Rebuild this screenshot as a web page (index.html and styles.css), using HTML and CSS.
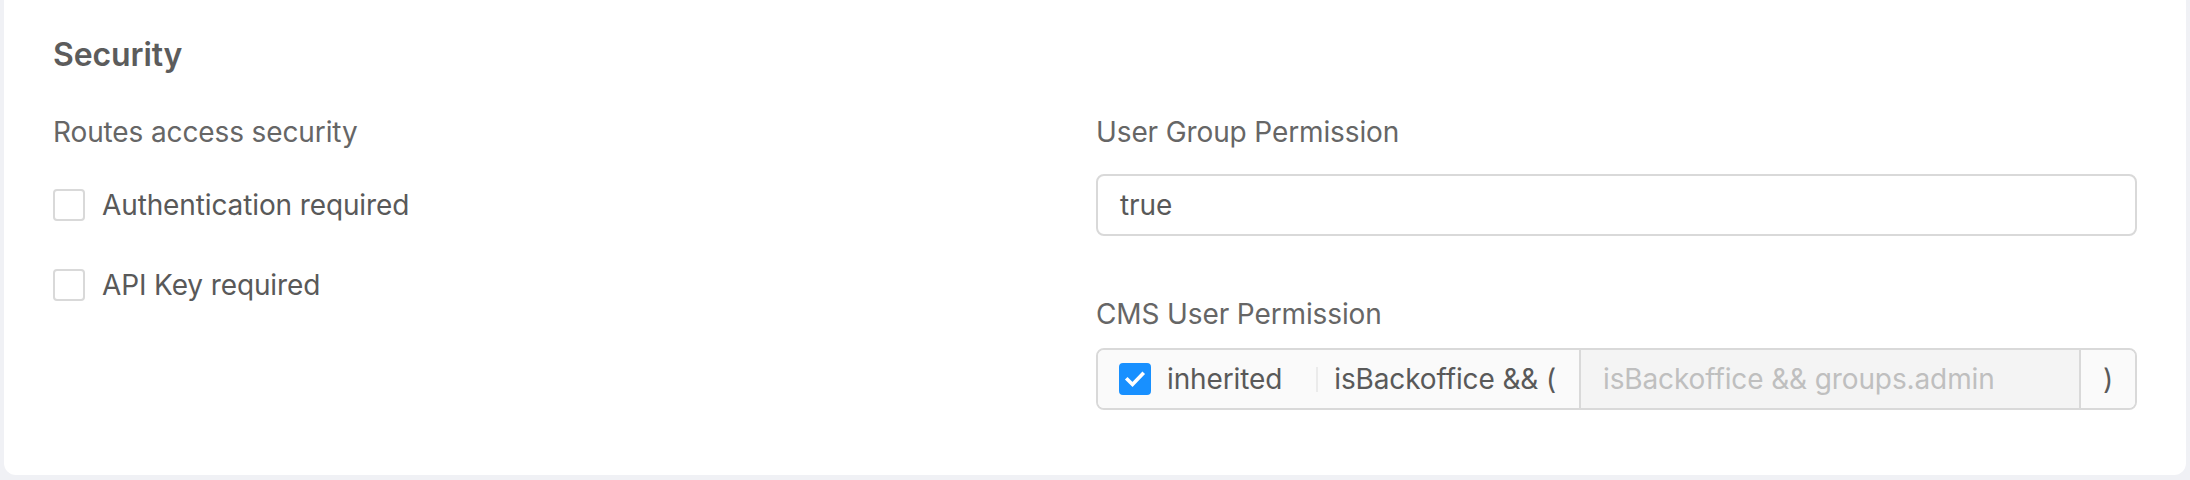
FILE: index.html
```html
<!DOCTYPE html>
<html lang="en">
<head>
<meta charset="utf-8">
<title>Security</title>
<link rel="stylesheet" href="styles.css">
</head>
<body>
<section class="card">
  <h2 class="card-title">Security</h2>
  <div class="columns">
    <div class="col">
      <div class="field-label">Routes access security</div>
      <div class="checks">
        <label class="check-row"><span class="box"></span><span class="check-text">Authentication required</span></label>
        <label class="check-row"><span class="box"></span><span class="check-text">API Key required</span></label>
      </div>
    </div>
    <div class="col">
      <div class="field-label">User Group Permission</div>
      <div class="input">true</div>
      <div class="field-label field-label--cms">CMS User Permission</div>
      <div class="group">
        <div class="addon addon--left">
          <span class="box box--checked"><svg viewBox="0 0 32 32" width="32" height="32"><path d="M8.5 16.5 L13.5 21.5 L23.5 11" fill="none" stroke="#fff" stroke-width="3.6" stroke-linecap="square" stroke-linejoin="miter"/></svg></span>
          <span class="inherit-text">inherited</span>
          <span class="sep"></span>
          <span class="prefix">isBackoffice &amp;&amp; (</span>
        </div>
        <div class="group-input">isBackoffice &amp;&amp; groups.admin</div>
        <div class="addon addon--right">)</div>
      </div>
    </div>
  </div>
</section>
</body>
</html>
```

FILE: styles.css
```css
* { box-sizing: border-box; }
html, body { margin: 0; padding: 0; }
body {
  background: #f0f1f5;
  font-family: Inter, "Noto Sans", sans-serif;
  color: #595959;
  height: 480px;
  overflow: hidden;
  letter-spacing: -0.12px;
}
.card {
  margin: 0 4px;
  background: #ffffff;
  border-radius: 0 0 12px 12px;
  padding: 35px 49px 65px 49px;
}
.card-title {
  margin: 0 0 35px 0;
  font-size: 32px;
  line-height: 40px;
  font-weight: 600;
  color: #5c5c5c;
}
.columns {
  display: grid;
  grid-template-columns: 1fr 1fr;
  column-gap: 2px;
}
.field-label {
  font-size: 28px;
  line-height: 44px;
  color: #666666;
}
.checks {
  margin-top: 29px;
  display: flex;
  flex-direction: column;
  gap: 36px;
}
.check-row {
  display: flex;
  align-items: center;
  height: 44px;
  font-size: 28px;
  line-height: 44px;
  color: #595959;
}
.box {
  width: 32px;
  height: 32px;
  border: 2px solid #d9d9d9;
  border-radius: 4px;
  background: #fff;
  flex: none;
  display: inline-flex;
}
.box--checked {
  background: #1890ff;
  border-color: #1890ff;
}
.box--checked svg { margin: -2px; }
.check-text { margin-left: 17px; }
.input {
  margin-top: 20px;
  height: 62px;
  border: 2px solid #d9d9d9;
  border-radius: 8px;
  padding: 0 22px;
  font-size: 28px;
  line-height: 58px;
  color: #595959;
}
.field-label--cms { margin-top: 56px; }
.group {
  margin-top: 12px;
  height: 62px;
  display: flex;
  border: 2px solid #d9d9d9;
  border-radius: 8px;
  overflow: hidden;
  font-size: 28px;
  line-height: 58px;
}
.addon {
  background: #fafafa;
  display: flex;
  align-items: center;
  color: #595959;
  flex: none;
}
.addon--left {
  width: 483px;
  padding-left: 21px;
  border-right: 2px solid #d9d9d9;
}
.inherit-text { margin-left: 16px; }
.sep {
  width: 2px;
  height: 25px;
  background: #ebebeb;
  margin: 0 16px 0 34px;
}
.group-input {
  flex: 1;
  background: #f4f4f4;
  color: #bfbfbf;
  padding-left: 22px;
  white-space: nowrap;
  overflow: hidden;
}
.addon--right {
  width: 56px;
  border-left: 2px solid #d9d9d9;
  justify-content: center;
}
```
